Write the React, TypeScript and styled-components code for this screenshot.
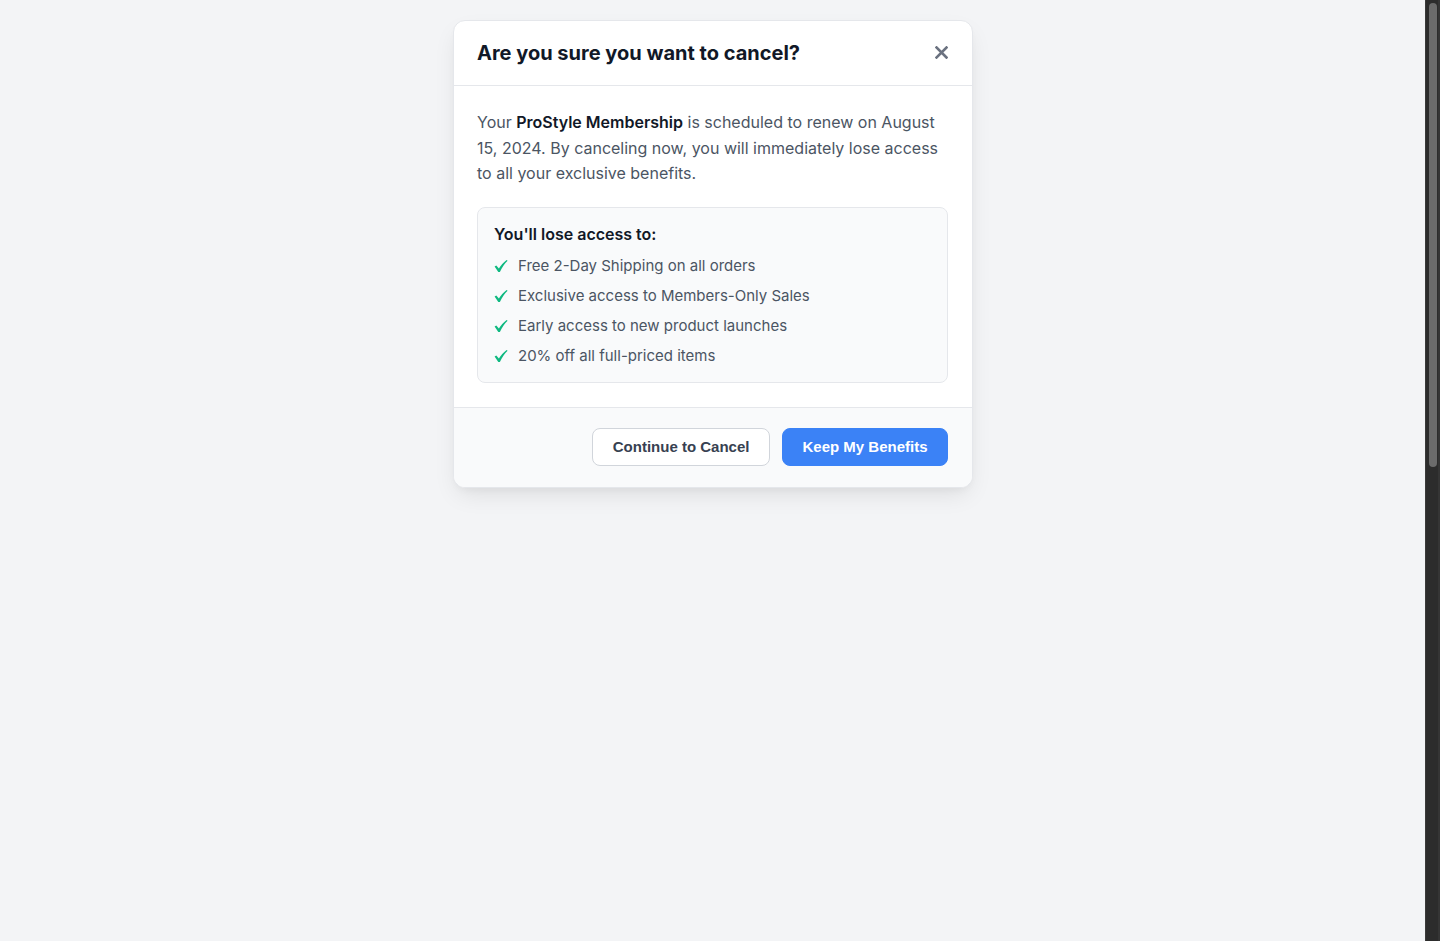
import React from "react";
import styled, { createGlobalStyle } from "styled-components";

const GlobalStyle = createGlobalStyle`
  html, body { margin: 0; padding: 0; }
  body {
    background: #f3f4f6;
    font-family: Inter, "Noto Sans", "Liberation Sans", sans-serif;
    -webkit-font-smoothing: antialiased;
  }
  * { box-sizing: border-box; }
`;

const Page = styled.div`
  min-height: 1890px;
  padding: 20px 14px 0 0;
  display: flex;
  justify-content: center;
  align-items: flex-start;
`;

const ScrollTrack = styled.div`
  position: fixed;
  top: 0;
  right: 0;
  width: 15px;
  height: 100vh;
  background: #2c2c2c;
  border-left: 1px solid #3a3a3a;
  border-right: 2px solid #353535;
  padding: 3px 0 0 3px;
`;

const ScrollThumb = styled.div`
  width: 8px;
  height: 464px;
  border-radius: 4px;
  background: #6b6b6b;
`;

const Modal = styled.div`
  width: 520px;
  background: #ffffff;
  border-radius: 12px;
  box-shadow: 0 10px 25px -5px rgba(0, 0, 0, 0.1), 0 4px 10px -4px rgba(0, 0, 0, 0.06);
  border: 1px solid #e5e7eb;
  overflow: hidden;
`;

const Header = styled.div`
  display: flex;
  align-items: center;
  justify-content: space-between;
  padding: 20px 24px 20px 23px;
  border-bottom: 1px solid #e5e7eb;
`;

const Title = styled.h2`
  margin: 0;
  font-size: 20px;
  line-height: 24px;
  font-weight: 700;
  color: #111827;
`;

const CloseButton = styled.button`
  border: none;
  background: none;
  padding: 0;
  width: 24px;
  height: 24px;
  display: flex;
  align-items: center;
  justify-content: center;
  color: #6b7280;
  cursor: pointer;
  margin-right: -5px;
  margin-top: -2px;
`;

const Body = styled.div`
  padding: 24px 24px 24px 23px;
`;

const Paragraph = styled.p`
  margin: 0 0 20px;
  font-size: 16px;
  line-height: 25.6px;
  color: #4b5563;

  strong {
    color: #111827;
    font-weight: 600;
  }
`;

const BenefitBox = styled.div`
  background: #f9fafb;
  border: 1px solid #e5e7eb;
  border-radius: 8px;
  padding: 16px 16px 15px;
`;

const BoxTitle = styled.div`
  font-size: 16px;
  line-height: 20px;
  font-weight: 600;
  color: #111827;
  margin-bottom: 11px;
`;

const List = styled.ul`
  list-style: none;
  margin: 0;
  padding: 0;
  display: flex;
  flex-direction: column;
  gap: 8px;
`;

const Item = styled.li`
  display: flex;
  align-items: center;
  gap: 10px;
  font-size: 15px;
  line-height: 22px;
  color: #4b5563;
`;

const Check = styled.svg`
  width: 14px;
  height: 14px;
  color: #10b981;
  flex-shrink: 0;
`;

const Footer = styled.div`
  display: flex;
  justify-content: flex-end;
  gap: 12px;
  padding: 20px 24px 21px;
  background: #f9fafb;
  border-top: 1px solid #e5e7eb;
`;

const Button = styled.button<{ $primary?: boolean }>`
  height: 38px;
  padding: 0 19.5px;
  border-radius: 8px;
  font-family: "Liberation Sans", Arial, sans-serif;
  font-size: 15px;
  font-weight: 700;
  cursor: pointer;
  border: 1px solid ${(p) => (p.$primary ? "#3b82f6" : "#d1d5db")};
  background: ${(p) => (p.$primary ? "#3b82f6" : "#ffffff")};
  color: ${(p) => (p.$primary ? "#ffffff" : "#374151")};
`;

const benefits = [
  "Free 2-Day Shipping on all orders",
  "Exclusive access to Members-Only Sales",
  "Early access to new product launches",
  "20% off all full-priced items",
];

export default function App() {
  return (
    <>
      <GlobalStyle />
      <Page>
        <Modal>
          <Header>
            <Title>Are you sure you want to cancel?</Title>
            <CloseButton aria-label="Close">
              <svg width="13" height="13" viewBox="0 0 13 13">
                <path d="M1.5 1.5 L11.5 11.5 M11.5 1.5 L1.5 11.5" stroke="currentColor" strokeWidth="2.6" strokeLinecap="square" />
              </svg>
            </CloseButton>
          </Header>
          <Body>
            <Paragraph>
              Your <strong>ProStyle Membership</strong> is scheduled to renew on August 15, 2024. By canceling now, you will immediately lose access to all your exclusive benefits.
            </Paragraph>
            <BenefitBox>
              <BoxTitle>You'll lose access to:</BoxTitle>
              <List>
                {benefits.map((b) => (
                  <Item key={b}>
                    <Check viewBox="0 0 14 14" aria-hidden="true">
                      <path
                        d="M0.6 7.6 L2.3 6.6 L4.9 9.6 C6.8 6.4 9.4 3.2 12.6 0.9 L13.6 1.8 C10.6 4.6 8 8.4 5.9 13 L4.3 13 Z"
                        fill="currentColor"
                      />
                    </Check>
                    {b}
                  </Item>
                ))}
              </List>
            </BenefitBox>
          </Body>
          <Footer>
            <Button>Continue to Cancel</Button>
            <Button $primary>Keep My Benefits</Button>
          </Footer>
        </Modal>
      </Page>
      <ScrollTrack aria-hidden="true">
        <ScrollThumb />
      </ScrollTrack>
    </>
  );
}
